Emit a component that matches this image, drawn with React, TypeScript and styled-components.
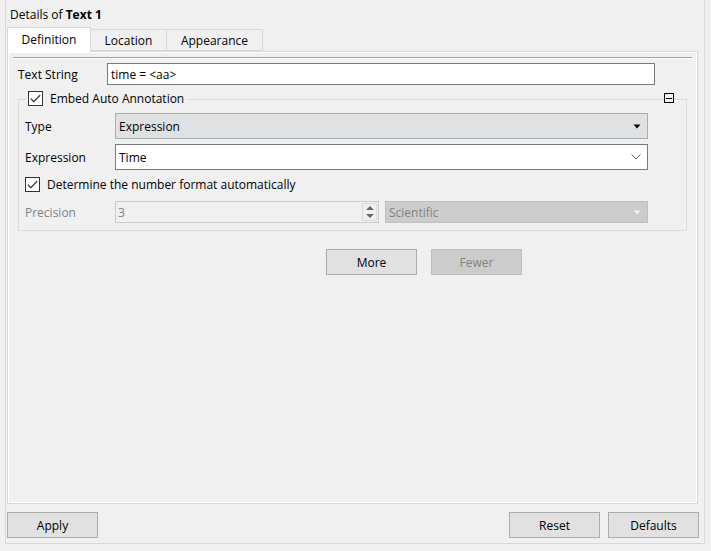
import React from 'react';
import styled, { createGlobalStyle } from 'styled-components';

const Global = createGlobalStyle`
  html, body { margin: 0; padding: 0; background: #f0f0f0; }
  body {
    font-family: "Open Sans", "Noto Sans", sans-serif;
    font-size: 12px;
    line-height: 15px;
    color: #000;
  }
  * { box-sizing: border-box; }
`;

const Window = styled.div`
  width: 711px;
  height: 551px;
  background: #f0f0f0;
  overflow: hidden;
`;

const Frame = styled.div`
  margin-left: 5px;
  width: 700px;
  height: 544px;
  border: 1px solid #d9d9d9;
  border-top: none;
  display: flex;
  flex-direction: column;
`;

const Title = styled.div`
  height: 27px;
  padding-left: 4px;
  padding-top: 1px;
  display: flex;
  align-items: center;
  white-space: pre;
  b { font-weight: 700; }
`;

const TabBar = styled.div`
  height: 24px;
  margin-left: 1px;
  display: flex;
  align-items: flex-end;
  position: relative;
  z-index: 1;
`;

const Tab = styled.div<{ $active?: boolean; $w: number }>`
  width: ${(p) => p.$w}px;
  height: ${(p) => (p.$active ? 25 : 22)}px;
  margin-bottom: ${(p) => (p.$active ? -1 : 0)}px;
  display: flex;
  align-items: center;
  justify-content: center;
  padding-bottom: ${(p) => (p.$active ? 2 : 0)}px;
  background: ${(p) => (p.$active ? '#ffffff' : '#f0f0f0')};
  border: 1px solid #d9d9d9;
  border-bottom: ${(p) => (p.$active ? 'none' : '1px solid #d9d9d9')};
  margin-right: -1px;
`;

const Pane = styled.div`
  margin-left: 1px;
  width: 691px;
  height: 453px;
  border: 1px solid #d9d9d9;
  background: #f0f0f0;
  box-shadow: inset 1px 1px 0 #ffffff, inset -1px -1px 0 #ffffff;
  padding: 5px;
`;

const HLine = styled.div`
  height: 2px;
  border-top: 1px solid #a0a0a0;
  border-bottom: 1px solid #ffffff;
`;

const Body = styled.div`
  display: flex;
  flex-direction: column;
`;

const Row = styled.div<{ $mt?: number; $pl?: number }>`
  display: flex;
  align-items: center;
  margin-top: ${(p) => p.$mt ?? 0}px;
  padding-left: ${(p) => p.$pl ?? 0}px;
`;

const Label = styled.div<{ $w: number; $disabled?: boolean }>`
  width: ${(p) => p.$w}px;
  flex: none;
  padding-top: 1px;
  color: ${(p) => (p.$disabled ? '#838383' : '#000')};
`;

const TextInput = styled.div`
  width: 548px;
  height: 22px;
  background: #fff;
  border: 1px solid #7a7a7a;
  display: flex;
  align-items: center;
  padding-left: 3px;
`;

const GroupWrap = styled.div`
  position: relative;
  margin: 6px 5px 0 5px;
  padding-top: 8px;
`;

const GroupBox = styled.div`
  border: 1px solid #dcdcdc;
  padding: 13px 0 7px 6px;
  display: flex;
  flex-direction: column;
`;

const Legend = styled.div`
  position: absolute;
  top: 0;
  left: 7px;
  height: 15px;
  padding: 0 3px;
  background: #f0f0f0;
  display: flex;
  align-items: center;
  gap: 7px;
`;

const Collapse = styled.div`
  position: absolute;
  top: 2px;
  right: 13px;
  width: 10px;
  height: 10px;
  background: #f0f0f0;
  border: 1px solid #000;
  display: flex;
  align-items: center;
  justify-content: center;
  &::after {
    content: '';
    width: 6px;
    height: 1px;
    background: #000;
  }
`;

const Box = styled.div`
  width: 15px;
  height: 15px;
  flex: none;
  border: 1px solid #333;
  background: #fff;
  display: flex;
  align-items: center;
  justify-content: center;
`;

const CheckRow = styled.label`
  display: flex;
  align-items: center;
  height: 15px;
  gap: 7px;
`;

const Combo = styled.div<{ $variant: 'flat' | 'edit' | 'disabled'; $w: number; $h: number }>`
  width: ${(p) => p.$w}px;
  height: ${(p) => p.$h}px;
  flex: none;
  display: flex;
  align-items: center;
  justify-content: space-between;
  padding: 0 6px 0 3px;
  background: ${(p) =>
    p.$variant === 'flat' ? '#e0e1e3' : p.$variant === 'edit' ? '#ffffff' : '#cccccc'};
  border: 1px solid
    ${(p) => (p.$variant === 'flat' ? '#a6aeb7' : p.$variant === 'edit' ? '#7a7a7a' : '#bfbfbf')};
  color: ${(p) => (p.$variant === 'disabled' ? '#838383' : '#000')};
`;

const Spin = styled.div`
  width: 264px;
  height: 22px;
  flex: none;
  display: flex;
  align-items: stretch;
  justify-content: space-between;
  background: #f0f0f0;
  border: 1px solid #cccccc;
  color: #838383;
  padding: 0 1px 0 2px;
`;

const SpinValue = styled.div`
  display: flex;
  align-items: center;
`;

const SpinButtons = styled.div`
  width: 15px;
  display: flex;
  flex-direction: column;
  border: 1px solid #dadada;
  margin: 1px 0;
`;

const SpinBtn = styled.div`
  flex: 1;
  display: flex;
  align-items: center;
  justify-content: center;
`;

const Button = styled.div<{ $disabled?: boolean }>`
  width: 91px;
  height: 26px;
  flex: none;
  display: flex;
  align-items: center;
  justify-content: center;
  background: ${(p) => (p.$disabled ? '#cccccc' : '#e1e1e1')};
  border: 1px solid ${(p) => (p.$disabled ? '#bfbfbf' : '#adadad')};
  color: ${(p) => (p.$disabled ? '#838383' : '#000')};
`;

const ButtonRow = styled.div<{ $mt: number; $pl: number; $gap: number }>`
  display: flex;
  margin-top: ${(p) => p.$mt}px;
  padding-left: ${(p) => p.$pl}px;
  gap: ${(p) => p.$gap}px;
`;

const Footer = styled.div`
  display: flex;
  margin-top: 8px;
  padding: 0 5px 0 1px;
  gap: 8px;
`;

const Spacer = styled.div`
  flex: 1;
`;

const Check = () => (
  <svg width="11" height="9" viewBox="0 0 11 9">
    <path d="M0.8 4.6 L3.8 7.6 L10.2 1.2" fill="none" stroke="#222" strokeWidth="1.2" />
  </svg>
);

const DownFilled = ({ color }: { color: string }) => (
  <svg width="8" height="5" viewBox="0 0 8 5">
    <path d="M0.5 0.5 H7.5 L4 4.5 Z" fill={color} />
  </svg>
);

const Chevron = () => (
  <svg width="10" height="6" viewBox="0 0 10 6">
    <path d="M0.5 0.5 L5 5 L9.5 0.5" fill="none" stroke="#5a5a5a" strokeWidth="1" />
  </svg>
);

const Tri = ({ up }: { up?: boolean }) => (
  <svg width="8" height="4" viewBox="0 0 8 4">
    <path d={up ? 'M0 4 H8 L4 0 Z' : 'M0 0 H8 L4 4 Z'} fill="#6a6a6a" />
  </svg>
);

export default function App() {
  return (
    <>
      <Global />
      <Window>
        <Frame>
          <Title>
            Details of <b>Text 1</b>
          </Title>
          <TabBar>
            <Tab $active $w={84}>Definition</Tab>
            <Tab $w={77}>Location</Tab>
            <Tab $w={97}>Appearance</Tab>
          </TabBar>
          <Pane>
            <HLine />
            <Body>
              <Row $mt={4} $pl={5}>
                <Label $w={89}>Text String</Label>
                <TextInput>time = &lt;aa&gt;</TextInput>
              </Row>
              <GroupWrap>
                <Legend>
                  <Box>
                    <Check />
                  </Box>
                  Embed Auto Annotation
                </Legend>
                <Collapse />
                <GroupBox>
                  <Row>
                    <Label $w={90}>Type</Label>
                    <Combo $variant="flat" $w={533} $h={26}>
                      Expression
                      <DownFilled color="#000" />
                    </Combo>
                  </Row>
                  <Row $mt={5}>
                    <Label $w={90}>Expression</Label>
                    <Combo $variant="edit" $w={533} $h={26}>
                      Time
                      <Chevron />
                    </Combo>
                  </Row>
                  <Row $mt={7}>
                    <CheckRow>
                      <Box>
                        <Check />
                      </Box>
                      Determine the number format automatically
                    </CheckRow>
                  </Row>
                  <Row $mt={9}>
                    <Label $w={90} $disabled>
                      Precision
                    </Label>
                    <Spin>
                      <SpinValue>3</SpinValue>
                      <SpinButtons>
                        <SpinBtn>
                          <Tri up />
                        </SpinBtn>
                        <SpinBtn>
                          <Tri />
                        </SpinBtn>
                      </SpinButtons>
                    </Spin>
                    <Combo $variant="disabled" $w={263} $h={22} style={{ marginLeft: 6 }}>
                      Scientific
                      <DownFilled color="#f4f4f4" />
                    </Combo>
                  </Row>
                </GroupBox>
              </GroupWrap>
              <ButtonRow $mt={18} $pl={313} $gap={14}>
                <Button>More</Button>
                <Button $disabled>Fewer</Button>
              </ButtonRow>
            </Body>
          </Pane>
          <Footer>
            <Button>Apply</Button>
            <Spacer />
            <Button>Reset</Button>
            <Button>Defaults</Button>
          </Footer>
        </Frame>
      </Window>
    </>
  );
}
